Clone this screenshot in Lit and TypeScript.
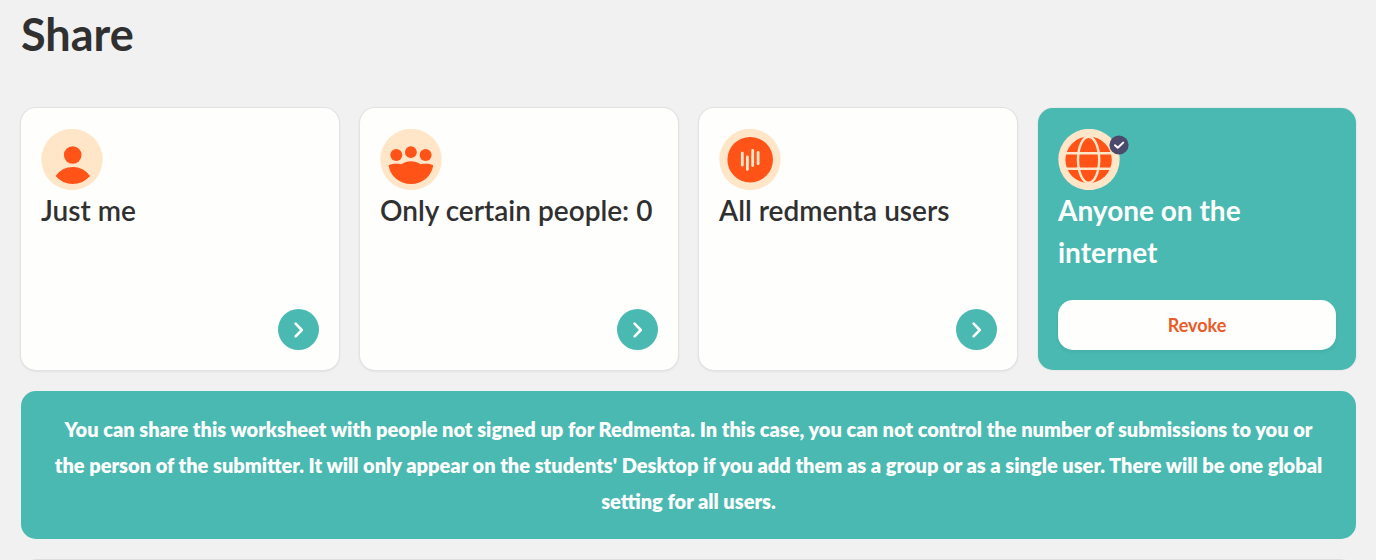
import { LitElement, html, css, svg, nothing } from "lit";
import { customElement, property } from "lit/decorators.js";

const icons = {
  me: svg`
    <circle cx="31.7" cy="26" r="8.8" fill="#ff5317"></circle>
    <path d="M14.6 47a20.8 20.8 0 0 1 34.4 0a22.4 22.4 0 0 1-34.4 0z" fill="#ff5317"></path>`,
  group: svg`
    <circle cx="16.3" cy="26" r="6" fill="#ff5317"></circle>
    <circle cx="30.9" cy="23.2" r="5.9" fill="#ff5317"></circle>
    <circle cx="45.6" cy="26" r="6" fill="#ff5317"></circle>
    <path d="M8.6 36.2C12.5 34.6 17.5 34.4 21.4 35.2C27 31.2 35 31.2 40.6 35.2C44.5 34.4 49.5 34.6 53.2 36.2C52 46.5 42.8 55 31 55S9.8 46.5 8.6 36.2z" fill="#ff5317"></path>`,
  users: svg`
    <circle cx="31.2" cy="30.7" r="22.8" fill="#ff5317"></circle>
    <path d="M23.3 24.2V36.2M28.4 28V40.4M33.7 21.4V36.6M39.1 23.4V34.8" stroke="#ffe6c8" stroke-width="2.8" stroke-linecap="round" fill="none"></path>`,
  globe: svg`
    <circle cx="30.6" cy="30.8" r="23.2" fill="#ff5317"></circle>
    <ellipse cx="30.6" cy="30.8" rx="10.6" ry="23" stroke="#ffe6c8" stroke-width="2.4" fill="none"></ellipse>
    <path d="M7 24.3H54.4M7 39.7H54.4" stroke="#ffe6c8" stroke-width="2.4" fill="none"></path>`,
};

@customElement("share-card")
export class ShareCard extends LitElement {
  @property() icon: keyof typeof icons = "me";
  @property() label = "";
  @property({ type: Boolean, reflect: true }) active = false;

  static styles = css`
    :host {
      display: flex;
      flex-direction: column;
      box-sizing: border-box;
      min-width: 0;
      padding: 21px 20px 20px;
      border-radius: 15px;
      background: #fefefd;
      color: #303030;
      box-shadow: 0 0 0 1px #e2e2e2, 0 1px 3px rgba(0, 0, 0, 0.12);
    }
    :host([active]) {
      background: #49b9b2;
      color: #fefefd;
      box-shadow: 0 0 2px rgba(0, 0, 0, 0.12);
    }
    .icon {
      position: relative;
      display: flex;
      align-items: flex-start;
      width: 62px;
      height: 60px;
    }
    .badge {
      position: absolute;
      top: 6px;
      right: -9px;
      display: block;
    }
    .title {
      margin: 0 0 27px;
      font-size: 28px;
      font-weight: 600;
      line-height: 42px;
    }
    :host([active]) .title {
      font-weight: 700;
    }
    .go,
    .revoke {
      margin: auto 0 0;
      padding: 0;
      border: 0;
      font: inherit;
      cursor: pointer;
    }
    .go {
      display: grid;
      place-items: center;
      align-self: flex-end;
      width: 41px;
      height: 41px;
      border-radius: 50%;
      background: #49b9b2;
    }
    .revoke {
      height: 50px;
      border-radius: 15px;
      background: #fefefd;
      color: #ea5b27;
      font-size: 18px;
      font-weight: 700;
      box-shadow: 0 2px 4px rgba(0, 0, 0, 0.06);
    }
  `;

  render() {
    return html`
      <div class="icon">
        <svg width="62" height="61" viewBox="0 0 62 61" aria-hidden="true">
          <circle cx="31" cy="30.5" r="30.7" fill="#ffe6c8"></circle>
          ${icons[this.icon]}
        </svg>
        ${this.active
          ? html`<svg class="badge" width="20" height="20" viewBox="0 0 20 20" aria-hidden="true">
              <circle cx="10" cy="10" r="9.6" fill="#4b4a6c"></circle>
              <path d="M6 10.2l2.8 2.6l5.4-5.2" stroke="#fff" stroke-width="2" stroke-linecap="round" stroke-linejoin="round" fill="none"></path>
            </svg>`
          : nothing}
      </div>
      <h2 class="title">${this.label}</h2>
      ${this.active
        ? html`<button class="revoke" type="button">Revoke</button>`
        : html`<button class="go" type="button" aria-label=${this.label}>
            <svg width="20" height="20" viewBox="0 0 20 20" aria-hidden="true">
              <path d="M6.6 3.6L12.8 10L6.6 16.4" stroke="#fefefd" stroke-width="2.6" stroke-linecap="round" stroke-linejoin="round" fill="none"></path>
            </svg>
          </button>`}
    `;
  }
}

@customElement("app-root")
export class AppRoot extends LitElement {
  static styles = css`
    :host {
      display: flex;
      flex-direction: column;
      box-sizing: border-box;
      height: 100vh;
      overflow: hidden;
      padding: 0 20px 0 21px;
      background: #f1f1f1;
      color: #303030;
      font-family: Lato, "Open Sans", sans-serif;
    }
    .heading {
      margin: 0 0 40px;
      font-size: 45px;
      font-weight: 700;
      line-height: 68px;
    }
    .cards {
      display: grid;
      grid-template-columns: repeat(4, minmax(0, 1fr));
      gap: 21px;
    }
    .notice {
      margin: 21px 0 20px;
      padding: 20px 28px;
      border-radius: 15px;
      background: #49b9b2;
      color: #fefefd;
      font-size: 20px;
      font-weight: 800;
      line-height: 36px;
      text-align: center;
    }
    .panel {
      flex: 0 0 60px;
      box-sizing: border-box;
      border: 1px solid #dedede;
      border-radius: 15px;
      background: #fefefd;
    }
  `;

  render() {
    return html`
      <h1 class="heading">Share</h1>
      <div class="cards">
        <share-card icon="me" label="Just me"></share-card>
        <share-card icon="group" label="Only certain people: 0"></share-card>
        <share-card icon="users" label="All redmenta users"></share-card>
        <share-card icon="globe" label="Anyone on the internet" active></share-card>
      </div>
      <p class="notice">
        You can share this worksheet with people not signed up for Redmenta. In this case, you can not control the number of submissions to you or the person of the submitter. It will only appear on the students' Desktop if you add them as a group or as a single user. There will be one global setting for all users.
      </p>
      <section class="panel"></section>
    `;
  }
}
